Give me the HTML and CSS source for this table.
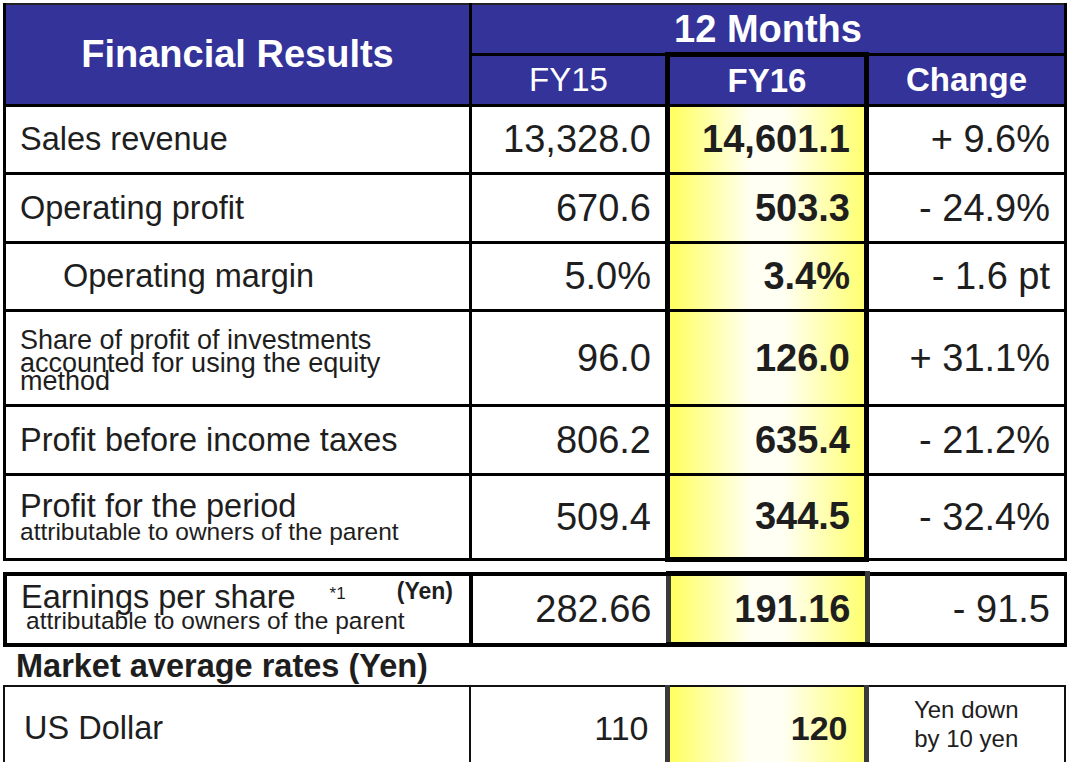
FILE: index.html
```html
<!DOCTYPE html>
<html lang="en">
<head>
<meta charset="utf-8">
<title>Financial Results</title>
<link rel="stylesheet" href="styles.css">
</head>
<body>
<div class="page">
  <table class="results">
    <colgroup>
      <col class="c-label"><col class="c-prev"><col class="c-cur"><col class="c-chg">
    </colgroup>
    <thead>
      <tr class="h1">
        <th rowspan="2" class="title">Financial Results</th>
        <th colspan="3" class="period">12 Months</th>
      </tr>
      <tr class="h2">
        <th class="sub">FY15</th>
        <th class="sub cur bold">FY16</th>
        <th class="sub bold">Change</th>
      </tr>
    </thead>
    <tbody>
      <tr class="r68">
        <td class="label">Sales revenue</td>
        <td class="num">13,328.0</td>
        <td class="num cur">14,601.1</td>
        <td class="num">+ 9.6%</td>
      </tr>
      <tr class="r69">
        <td class="label">Operating profit</td>
        <td class="num">670.6</td>
        <td class="num cur">503.3</td>
        <td class="num">- 24.9%</td>
      </tr>
      <tr class="r68">
        <td class="label indent">Operating margin</td>
        <td class="num">5.0%</td>
        <td class="num cur">3.4%</td>
        <td class="num">- 1.6 pt</td>
      </tr>
      <tr class="r95">
        <td class="label small">
          <span class="l1">Share of profit of investments</span>
          <span class="l2">accounted for using the equity</span>
          <span class="l3">method</span>
        </td>
        <td class="num">96.0</td>
        <td class="num cur">126.0</td>
        <td class="num">+ 31.1%</td>
      </tr>
      <tr class="r69">
        <td class="label">Profit before income taxes</td>
        <td class="num">806.2</td>
        <td class="num cur">635.4</td>
        <td class="num">- 21.2%</td>
      </tr>
      <tr class="r84">
        <td class="label two">
          <span class="main">Profit for the period</span>
          <span class="note">attributable to owners of the parent</span>
        </td>
        <td class="num">509.4</td>
        <td class="num cur last">344.5</td>
        <td class="num">- 32.4%</td>
      </tr>
    </tbody>
  </table>

  <table class="eps">
    <colgroup>
      <col class="c-label"><col class="c-prev"><col class="c-cur"><col class="c-chg">
    </colgroup>
    <tbody>
      <tr>
        <td class="label eps-label">
          <span class="eps-top">
            <span class="main">Earnings per share</span>
            <span class="fn">*1</span>
            <span class="unit">(Yen)</span>
          </span>
          <span class="note">attributable to owners of the parent</span>
        </td>
        <td class="num">282.66</td>
        <td class="num cur">191.16</td>
        <td class="num">- 91.5</td>
      </tr>
    </tbody>
  </table>

  <h2 class="section">Market average rates (Yen)</h2>

  <table class="rates">
    <colgroup>
      <col class="c-label"><col class="c-prev"><col class="c-cur"><col class="c-chg">
    </colgroup>
    <tbody>
      <tr>
        <td class="label usd">US Dollar</td>
        <td class="num rate">110</td>
        <td class="num rate cur">120</td>
        <td class="note-cell">Yen down<br>by 10 yen</td>
      </tr>
    </tbody>
  </table>
</div>
</body>
</html>
```

FILE: styles.css
```css
html, body {
  margin: 0;
  padding: 0;
  background: #ffffff;
}

body {
  font-family: "Liberation Sans", Arial, Helvetica, sans-serif;
  color: #1e1e1e;
}

.page {
  width: 1067px;
  height: 762px;
  overflow: hidden;
  box-sizing: border-box;
  padding: 3px 0 0 3px;
}

table {
  border-collapse: collapse;
  table-layout: fixed;
  width: 1061px;
}

.c-label { width: 466px; }
.c-prev { width: 197px; }
.c-cur { width: 199px; }
.c-chg { width: 199px; }

td, th {
  border: 3px solid #000;
  padding: 0 14px;
  vertical-align: middle;
}

/* ---------- header ---------- */
.results thead th {
  background: #333399;
  color: #ffffff;
  font-weight: bold;
  text-align: center;
  padding: 0;
}

.results thead .title {
  font-size: 38px;
}

.results .h1 th {
  height: 47px;
  border-top: 2px solid #222;
}

.results .h1 .period {
  font-size: 38px;
  line-height: 40px;
}

.results .h2 th {
  height: 47px;
}

.results thead .sub {
  font-size: 33px;
  font-weight: normal;
}

.results thead .sub.bold {
  font-weight: bold;
}

.results thead .cur {
  border-left: 5px solid #000;
  border-right: 5px solid #000;
  border-top: 5px solid #000;
}

/* ---------- body rows ---------- */
.r68 td { height: 65px; }
.r69 td { height: 66px; }
.r95 td { height: 92px; }
.r84 td { height: 81px; }

.label {
  font-size: 32.5px;
  text-align: left;
  padding-left: 14px;
}

.label.indent {
  padding-left: 57px;
}

.num {
  font-size: 38px;
  text-align: right;
  padding-right: 14px;
}

.cur {
  border-left: 5px solid #000;
  border-right: 5px solid #000;
  font-weight: bold;
  background: linear-gradient(90deg, #ffff5e 0%, #fffff4 42%, #fffff4 58%, #ffff70 100%);
}

.cur.last {
  border-bottom: 5px solid #000;
}

.label.small {
  font-size: 27px;
}

.label.small span {
  display: block;
}

.l1 { line-height: 24px; }
.l2 { line-height: 22px; }
.l3 { line-height: 14px; }

.label.two span {
  display: block;
}

.label.two .main {
  font-size: 32.5px;
  line-height: 28px;
}

.label.two .note,
.eps-label .note {
  font-size: 24.5px;
  line-height: 23px;
}

/* ---------- EPS ---------- */
.eps {
  margin-top: 9px;
}

.eps td {
  height: 66px;
  border-width: 4px;
}

.eps .cur {
  border-left: 5px solid #3a3a3a;
  border-right: 5px solid #3a3a3a;
  border-top: 5px solid #000;
  border-bottom: 5px solid #000;
}

.eps-label span {
  display: block;
}

.eps-label .eps-top {
  display: flex;
  align-items: flex-start;
  line-height: 26px;
  margin-top: -4px;
}

.eps-label .main {
  font-size: 32.5px;
}

.eps-label .fn {
  font-size: 17px;
  line-height: 20px;
  margin-left: 34px;
}

.eps-label .unit {
  font-size: 23px;
  font-weight: bold;
  line-height: 20px;
  margin-top: -3px;
  margin-left: auto;
  margin-right: 2px;
}

.eps-label .note {
  line-height: 21px;
  padding-left: 5px;
}

/* ---------- market rates ---------- */
.section {
  margin: 0;
  padding: 1px 0 0 13px;
  font-size: 32.5px;
  line-height: 36px;
  font-weight: bold;
  color: #1e1e1e;
}

.rates {
  margin-top: 1px;
}

.rates td {
  height: 74px;
  border-width: 2px;
  border-color: #111;
}

.rates .usd {
  padding-left: 19px;
}

.rates .rate {
  font-size: 34px;
  padding-right: 16px;
}

.rates .cur {
  border-left: 5px solid #3a3a3a;
  border-right: 5px solid #3a3a3a;
}

.note-cell {
  font-size: 24px;
  line-height: 29px;
  text-align: center;
  padding: 0 4px 8px;
}
```
